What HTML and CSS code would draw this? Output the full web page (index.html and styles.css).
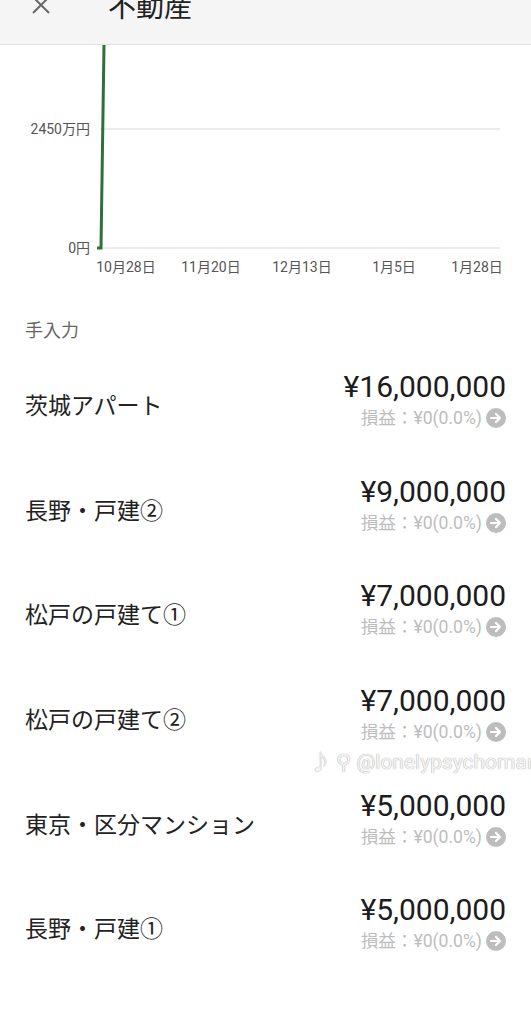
FILE: index.html
```html
<!DOCTYPE html>
<html lang="ja">
<head>
    <meta charset="UTF-8">
    <meta name="viewport" content="width=device-width, initial-scale=1.0">
    <title>不動産</title>
    <link rel="stylesheet" href="styles.css">
</head>
<body>
    <header class="topbar">
        <div class="topbar-row">
            <svg class="close" viewBox="0 0 20 20"><path d="M2 2l16 16M18 2L2 18"/></svg>
            <h1 class="title">不動産</h1>
        </div>
    </header>

    <!-- 推移グラフ -->
    <svg class="chart" width="531" height="245" viewBox="0 0 531 245">
        <line x1="100" y1="84" x2="500" y2="84" class="grid"/>
        <line x1="100" y1="203" x2="500" y2="203" class="grid"/>
        <text x="90" y="89" class="ylabel">2450万円</text>
        <text x="90" y="208" class="ylabel">0円</text>
        <polyline points="97,203 101,203 104,0" class="series"/>
        <text x="126" y="227" class="xlabel">10月28日</text>
        <text x="211" y="227" class="xlabel">11月20日</text>
        <text x="302" y="227" class="xlabel">12月13日</text>
        <text x="394" y="227" class="xlabel">1月5日</text>
        <text x="477" y="227" class="xlabel">1月28日</text>
    </svg>

    <div class="section-label">手入力</div>

    <ul class="assets">
        <li class="asset">
            <span class="name">茨城アパート</span>
            <div class="values">
                <span class="amount">¥16,000,000</span>
                <span class="profit">損益：¥0(0.0%) <i class="go"><svg viewBox="0 0 20 20"><path d="M5 10h9M10 6l4 4-4 4"/></svg></i></span>
            </div>
        </li>
        <li class="asset">
            <span class="name">長野・戸建②</span>
            <div class="values">
                <span class="amount">¥9,000,000</span>
                <span class="profit">損益：¥0(0.0%) <i class="go"><svg viewBox="0 0 20 20"><path d="M5 10h9M10 6l4 4-4 4"/></svg></i></span>
            </div>
        </li>
        <li class="asset">
            <span class="name">松戸の戸建て①</span>
            <div class="values">
                <span class="amount">¥7,000,000</span>
                <span class="profit">損益：¥0(0.0%) <i class="go"><svg viewBox="0 0 20 20"><path d="M5 10h9M10 6l4 4-4 4"/></svg></i></span>
            </div>
        </li>
        <li class="asset">
            <span class="name">松戸の戸建て②</span>
            <div class="values">
                <span class="amount">¥7,000,000</span>
                <span class="profit">損益：¥0(0.0%) <i class="go"><svg viewBox="0 0 20 20"><path d="M5 10h9M10 6l4 4-4 4"/></svg></i></span>
            </div>
            <span class="watermark">♪ ⚲ @lonelypsychoman</span>
        </li>
        <li class="asset">
            <span class="name">東京・区分マンション</span>
            <div class="values">
                <span class="amount">¥5,000,000</span>
                <span class="profit">損益：¥0(0.0%) <i class="go"><svg viewBox="0 0 20 20"><path d="M5 10h9M10 6l4 4-4 4"/></svg></i></span>
            </div>
        </li>
        <li class="asset">
            <span class="name">長野・戸建①</span>
            <div class="values">
                <span class="amount">¥5,000,000</span>
                <span class="profit">損益：¥0(0.0%) <i class="go"><svg viewBox="0 0 20 20"><path d="M5 10h9M10 6l4 4-4 4"/></svg></i></span>
            </div>
        </li>
    </ul>
</body>
</html>
```

FILE: styles.css
```css
body {
    margin: 0;
    font-family: Roboto, "Noto Sans CJK JP", sans-serif;
    background: #fff;
    color: #222;
    overflow: hidden;
}
.topbar {
    height: 45px;
    background: #f5f5f5;
    border-bottom: 1px solid #e2e2e2;
    box-sizing: border-box;
    overflow: hidden;
}
.topbar-row {
    display: flex;
    align-items: center;
    height: 30px;
    margin-top: -10px;
    padding-left: 31px;
}
.close {
    width: 20px;
    height: 20px;
    margin-right: 57px;
    fill: none;
    stroke: #666;
    stroke-width: 2;
}
.title {
    margin: 0;
    font-size: 28px;
    font-weight: 400;
    color: #222;
    font-family: "Noto Sans CJK JP", sans-serif;
}
.chart {
    display: block;
}
.chart .grid {
    stroke: #e4e4e4;
    stroke-width: 1.5;
}
.chart .series {
    fill: none;
    stroke: #2e6f3a;
    stroke-width: 3;
}
.chart text {
    font-family: Roboto, "Noto Sans CJK JP", sans-serif;
    font-size: 14px;
    fill: #555;
}
.chart .ylabel {
    text-anchor: end;
}
.chart .xlabel {
    text-anchor: middle;
}
.section-label {
    padding: 26px 25px 0;
    height: 33px;
    font-size: 18px;
    color: #666;
    font-family: "Noto Sans CJK JP", sans-serif;
}
.assets {
    list-style: none;
    margin: 0;
    padding: 0;
}
.asset {
    position: relative;
    display: flex;
    align-items: center;
    justify-content: space-between;
    height: 104.6px;
    padding: 0 25px;
}
.name {
    font-family: "Noto Sans CJK JP", sans-serif;
    font-size: 23px;
    color: #222;
    padding-top: 6px;
}
.values {
    display: flex;
    flex-direction: column;
    align-items: flex-end;
}
.amount {
    font-size: 30px;
    line-height: 34px;
    color: #1c1c1c;
}
.profit {
    display: flex;
    align-items: center;
    gap: 4px;
    font-size: 17.6px;
    line-height: 28px;
    color: #bdbdbd;
}
.go {
    display: inline-block;
    width: 20px;
    height: 20px;
    border-radius: 50%;
    background: #bdbdbd;
}
.go svg {
    width: 20px;
    height: 20px;
    fill: none;
    stroke: #fff;
    stroke-width: 2.2;
    stroke-linecap: round;
    stroke-linejoin: round;
}
.watermark {
    position: absolute;
    left: 310px;
    bottom: -8px;
    font-size: 21px;
    color: #f4f4f4;
    text-shadow: 0 0 1px #aaa, 0 0 1px #bbb;
    white-space: nowrap;
}
```
